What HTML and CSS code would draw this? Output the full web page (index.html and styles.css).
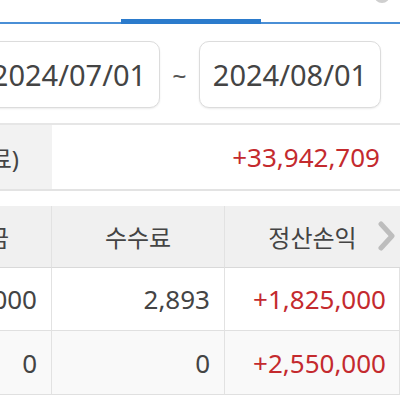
FILE: index.html
```html
<!DOCTYPE html>
<html lang="ko">
<head>
<meta charset="utf-8">
<link rel="stylesheet" href="styles.css">
</head>
<body>
<div class="page">
  <div class="tabs">
    <div class="tab t1"></div>
    <div class="tab active"></div>
    <div class="tab t3"><span class="dot"></span></div>
  </div>
  <div class="dates">
    <div class="datebox">2024/07/01</div>
    <div class="tilde">~</div>
    <div class="datebox">2024/08/01</div>
  </div>
  <div class="summary">
    <div class="sum-label">정산손익(수수료)</div>
    <div class="sum-value red">+33,942,709</div>
  </div>
  <div class="table">
    <div class="th">정산대금</div>
    <div class="th">수수료</div>
    <div class="th last">정산손익<svg class="chev" width="18" height="30" viewBox="0 0 18 30"><path d="M3 3 L14 15 L3 27" fill="none" stroke="#bdbdbd" stroke-width="5" stroke-linecap="round" stroke-linejoin="round"/></svg></div>
    <div class="td">1,828,000</div>
    <div class="td">2,893</div>
    <div class="td red">+1,825,000</div>
    <div class="td alt">0</div>
    <div class="td alt">0</div>
    <div class="td alt red">+2,550,000</div>
  </div>
</div>
</body>
</html>
```
FILE: styles.css
```css
html, body {
  margin: 0;
  padding: 0;
  background: #fff;
  overflow: hidden;
}
body {
  width: 400px;
  height: 400px;
  font-family: "Noto Sans", "Noto Sans CJK KR", sans-serif;
  color: #444;
}
.page {
  width: 400px;
  overflow: hidden;
}
.tabs {
  display: flex;
  height: 24px;
}
.tab {
  box-sizing: border-box;
  height: 24px;
  border-bottom: 2px solid #4a8fd6;
}
.t1 { width: 121px; }
.tab.active {
  width: 140px;
  border-bottom: 5px solid #2b7bcc;
}
.t3 {
  flex: 1;
  position: relative;
}
.dot {
  position: absolute;
  right: 10px;
  top: -13px;
  width: 16px;
  height: 16px;
  border-radius: 50%;
  background: #cfcfcf;
}
.dates {
  display: flex;
  align-items: center;
  margin: 17px 0 0 -22px;
  height: 67px;
}
.datebox {
  box-sizing: border-box;
  width: 182px;
  height: 67px;
  border: 1.5px solid #dcdcdc;
  border-radius: 10px;
  box-shadow: 0 1px 2px rgba(0,0,0,0.08);
  display: flex;
  align-items: center;
  justify-content: center;
  font-size: 29px;
  color: #444;
  background: #fff;
}
.tilde {
  width: 39px;
  text-align: center;
  font-size: 25px;
  color: #555;
}
.summary {
  margin-top: 15px;
  display: flex;
  height: 64px;
  border-top: 2px solid #e6e6e6;
  border-bottom: 2px solid #e3e3e3;
  margin-left: -150px;
}
.sum-label {
  width: 202px;
  box-sizing: border-box;
  background: #f2f2f2;
  display: flex;
  align-items: center;
  justify-content: flex-end;
  padding-right: 33px;
  font-size: 24px;
  color: #444;
}
.sum-value {
  flex: 1;
  display: flex;
  align-items: center;
  justify-content: flex-end;
  padding-right: 20px;
  font-size: 26px;
}
.red { color: #c42a2e; }
.table {
  margin-top: 15px;
  margin-left: -121px;
  display: grid;
  grid-template-columns: 173px 173px 175px;
  grid-template-rows: 62px 63px 64px;
}
.th, .td {
  box-sizing: border-box;
  display: flex;
  align-items: center;
  border-right: 1px solid #e2e2e2;
  border-bottom: 1px solid #e0e0e0;
}
.th {
  background: #f0f0f0;
  justify-content: center;
  font-size: 24px;
  color: #444;
  border-bottom: 1.5px solid #d9d9d9;
}
.th.last {
  position: relative;
  border-right: none;
}
.chev {
  position: absolute;
  right: 4px;
  top: 15px;
}
.td {
  justify-content: flex-end;
  padding-right: 14px;
  font-size: 26px;
  background: #fff;
}
.td.red { padding-right: 13px; }
.td.alt { background: #f9f9f9; }
```
